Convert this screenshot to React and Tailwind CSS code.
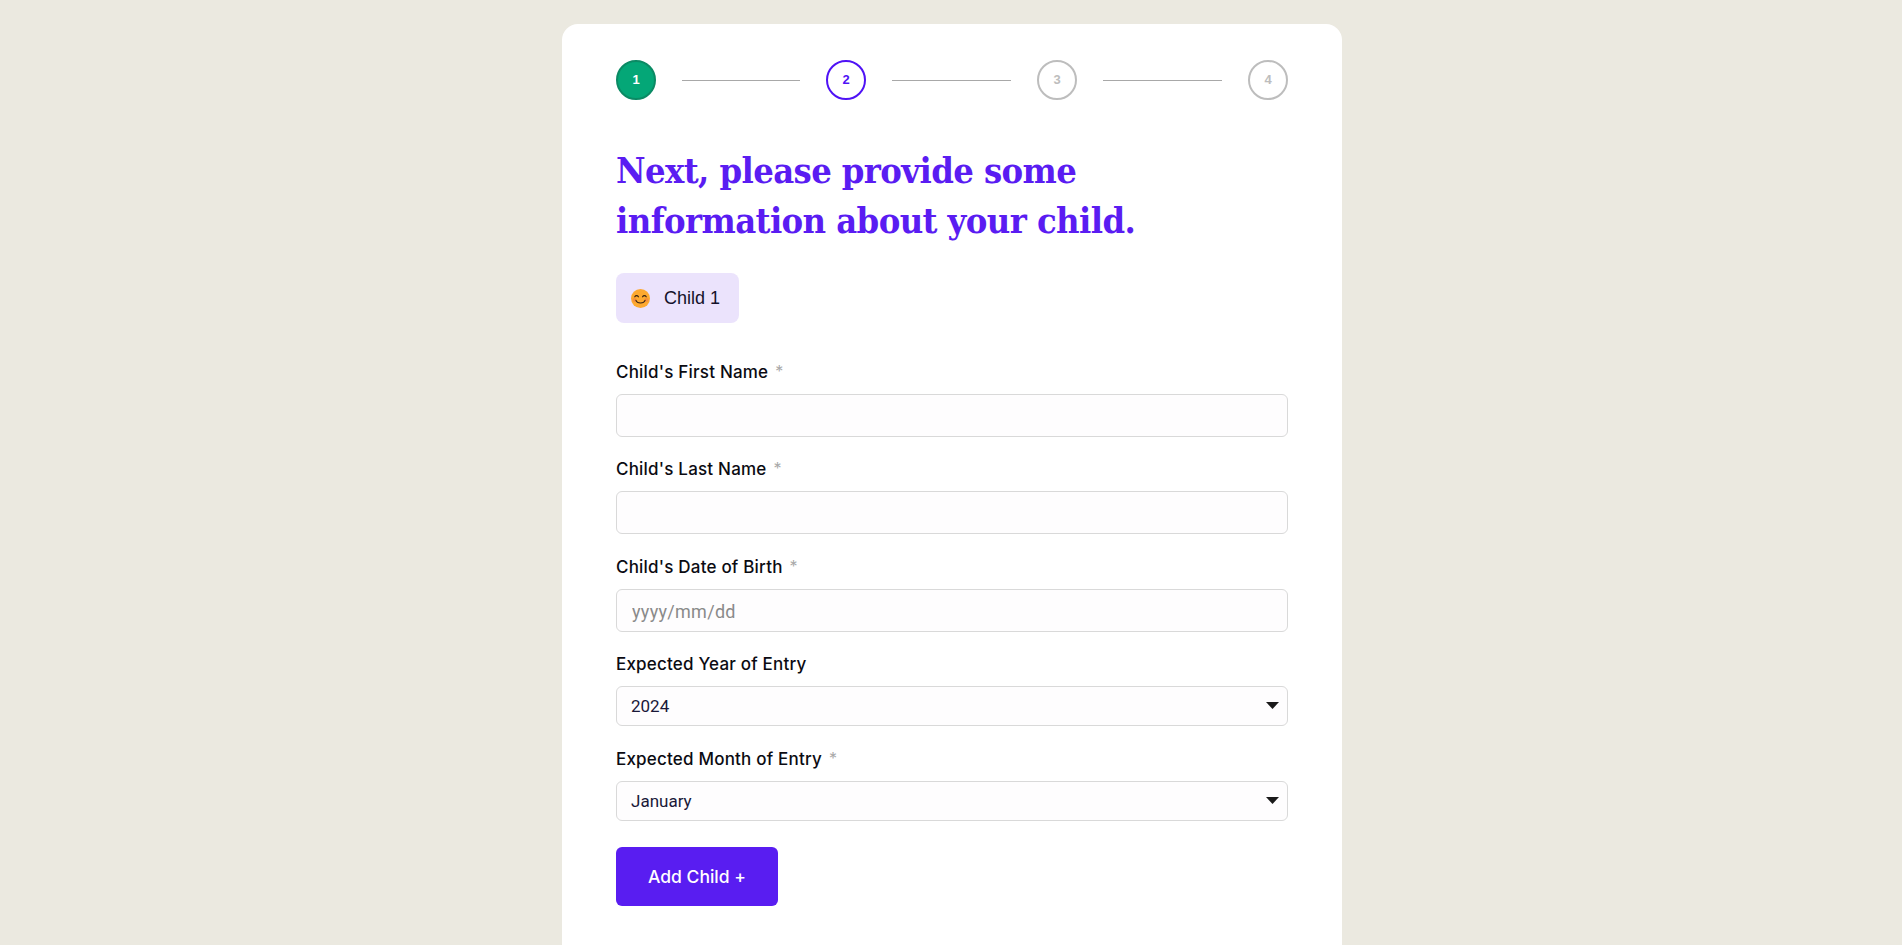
import React from 'react';

const fields = [
  { label: "Child's First Name", required: true, kind: 'text' },
  { label: "Child's Last Name", required: true, kind: 'text' },
  { label: "Child's Date of Birth", required: true, kind: 'date' },
  { label: 'Expected Year of Entry', kind: 'select', options: ['2024', '2025', '2026'] },
  { label: 'Expected Month of Entry', required: true, kind: 'select', options: ['January', 'February', 'March'] },
];

const SmileFace = () => (
  <svg width="19" height="19" viewBox="0 0 20 20" className="shrink-0">
    <circle cx="10" cy="10" r="10" fill="#fda92f" />
    <circle cx="3.8" cy="11.6" r="2.2" fill="#f0704a" opacity="0.45" />
    <circle cx="16.2" cy="11.6" r="2.2" fill="#f0704a" opacity="0.45" />
    <path d="M4 8.2c.8-1.6 3-1.6 3.8 0M12.2 8.2c.8-1.6 3-1.6 3.8 0" fill="none" stroke="#3b2412" strokeWidth="1.2" strokeLinecap="round" />
    <path d="M5.2 12c1.2 3.6 8.4 3.6 9.6 0" fill="none" stroke="#3b2412" strokeWidth="1.2" strokeLinecap="round" />
  </svg>
);

const Step = ({ n, className }) => (
  <div className={`w-10 h-10 shrink-0 rounded-full border-2 flex items-center justify-center text-[13px] font-bold font-['Liberation_Sans',sans-serif] ${className}`}>
    {n}
  </div>
);

const Field = ({ field }) => (
  <div className="mb-[19px] even:mb-5">
    <label className="flex h-[25px] pt-[2px] mb-[10px] items-center text-[17px] font-medium tracking-[0.2px] text-[#0b0b12] font-['Inter',sans-serif]">
      {field.label}
      {field.required && <span className="ml-[7px] -mt-1 text-[16px] font-normal text-[#a9a9a9]">*</span>}
    </label>
    {field.kind === 'select' ? (
      <div className="relative">
        <select className="w-full h-10 pl-[14px] pr-8 pt-[2px] appearance-none rounded-md border border-[#d9d9d9] bg-[#fefdfe] text-[17px] text-[#1a1838] font-['Roboto',sans-serif] outline-none">
          {field.options.map((o) => (
            <option key={o}>{o}</option>
          ))}
        </select>
        <svg width="13" height="7" viewBox="0 0 13 7" className="absolute right-[9px] top-4 pointer-events-none">
          <path d="M0 0h13L6.5 7z" fill="#1a1a1a" />
        </svg>
      </div>
    ) : (
      <input
        type="text"
        placeholder={field.kind === 'date' ? 'yyyy/mm/dd' : undefined}
        className="block w-full h-[43px] pl-[15px] pr-[15px] pt-[2px] rounded-md border border-[#d9d9d9] bg-[#fefdfe] text-[18px] tracking-[0.3px] font-['Roboto',sans-serif] placeholder:text-[#8a8a8a] outline-none"
      />
    )}
  </div>
);

const App = () => {
  return (
    <div className="h-screen overflow-hidden bg-[#ebe9e0] pt-6">
      <div className="w-[780px] ml-[562px] bg-white rounded-2xl px-[54px] pt-9 pb-24">
        <div className="flex items-center">
          <Step n={1} className="bg-[#04a777] border-[#0b8a64] text-white" />
          <div className="w-[118px] h-px bg-[#a8a8a8] mx-[26px]" />
          <Step n={2} className="border-[#4f12f5] text-[#4f12f5]" />
          <div className="w-[119px] h-px bg-[#a8a8a8] mx-[26px]" />
          <Step n={3} className="border-[#bdbdbd] text-[#bdbdbd]" />
          <div className="w-[119px] h-px bg-[#a8a8a8] mx-[26px]" />
          <Step n={4} className="border-[#bdbdbd] text-[#bdbdbd]" />
        </div>

        <h1 className="mt-[45px] mb-[28px] text-[36px] leading-[50px] font-bold text-[#5a1cf2] font-['DejaVu_Serif_Condensed','DejaVu_Serif',serif] tracking-[-0.6px]">
          Next, please provide some
          <br />
          information about your child.
        </h1>

        <div className="inline-flex items-center gap-[14px] h-[50px] pl-[15px] pr-[19px] rounded-lg bg-[#ebe3fc] text-[18px] text-[#14122a] font-['Liberation_Sans',sans-serif]">
          <SmileFace />
          Child 1
        </div>

        <div className="mt-9">
          {fields.map((f) => (
            <Field key={f.label} field={f} />
          ))}
        </div>

        <button className="mt-[7px] w-[162px] h-[59px] pt-[2px] rounded-md bg-[#591df1] text-white text-[17.5px] font-medium font-['Inter',sans-serif]">
          Add Child +
        </button>
      </div>
    </div>
  );
};

export default App;
